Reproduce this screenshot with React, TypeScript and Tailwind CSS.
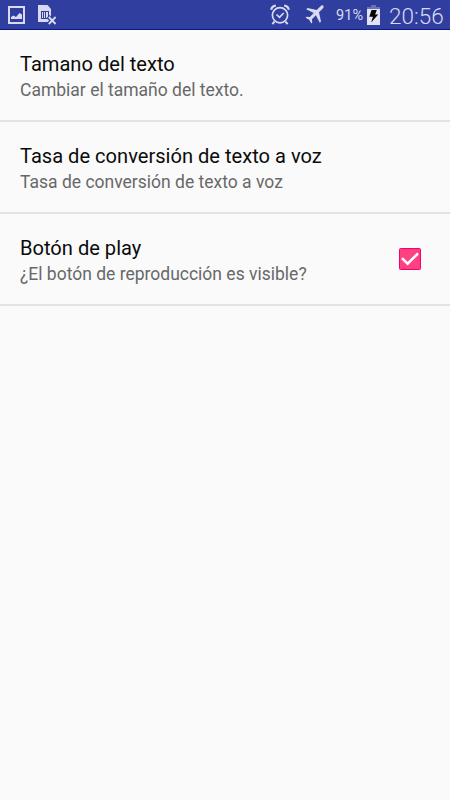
import { useState } from 'react';

type Preference = {
    title: string;
    summary: string;
    checkable?: boolean;
};

const preferences: Preference[] = [
    { title: 'Tamano del texto', summary: 'Cambiar el tamaño del texto.' },
    { title: 'Tasa de conversión de texto a voz', summary: 'Tasa de conversión de texto a voz' },
    { title: 'Botón de play', summary: '¿El botón de reproducción es visible?', checkable: true },
];

function PictureIcon() {
    return (
        <svg width="18" height="20" viewBox="0 0 18 20" fill="#d9daf0">
            <path fillRule="evenodd" d="M0 1h17v18H0zM2 3v14h13V3z" />
            <path d="M3 14v-2l2.500-1.500 2.500 1.500 3.500-4 2.500 1.500V14z" />
        </svg>
    );
}

function SimIcon() {
    return (
        <svg width="19" height="20" viewBox="0 0 19 20">
            <path d="M0 0h9.500L13 4v13H0z" fill="#d9daf0" />
            <path d="M3 6h1v8H3zm2 0h1v8H5zm2 0h1v8H7zm3 0h1v8h-1zM3 6h8v1H3zm0 7h8v1H3z" fill="#303f9f" />
            <path d="m10 11.500 8 8m0-8-8 8" stroke="#303f9f" strokeWidth="4" />
            <path d="m10.800 12 6.800 7m0-7-6.800 7" stroke="#d9daf0" strokeWidth="1.800" />
        </svg>
    );
}

function AlarmIcon() {
    return (
        <svg width="20" height="22" viewBox="0 0 20 22" fill="none" stroke="#d9daf0">
            <circle cx="10" cy="11.200" r="7.600" strokeWidth="1.700" />
            <path d="m6.500 10.500 3 2.900 4.200-4.400" strokeWidth="1.700" />
            <path d="M1.200 5.700C1.600 3.500 3.400 1.900 5.800 1.700M14.200 1.700c2.400.2 4.200 1.800 4.600 4" strokeWidth="2.200" />
            <path d="m4.400 17.700-2 2.400m13.200-2.400 2 2.400" strokeWidth="2" />
        </svg>
    );
}

function PlaneIcon() {
    return (
        <svg width="19" height="19" viewBox="0 0 19 19" fill="#d9daf0">
            <path d="M18.300.7c-.8-.7-2-.3-3 .7L11.700 5 2.500 3 1.200 4.200l7.500 3.900-3.800 4-3.300-.4-1.100 1 3.700 2.100 2.100 3.700 1-1.100-.4-3.200 4-3.900 3.900 7.500 1.200-1.300-2-9.200 3.600-3.600c1-1 1.400-2.200.7-3z" />
        </svg>
    );
}

function BatteryIcon() {
    return (
        <svg width="13" height="21" viewBox="0 0 13 21">
            <path d="M4 1h5v2h4v2H0V3h4z" fill="#6973b8" />
            <path d="M0 5h13v16H0z" fill="#e1e2f4" />
            <path d="M4.500 6h5.300L8.100 10.500h3.100L4.200 18.500l1.700-5.700H2.300z" fill="#050505" />
        </svg>
    );
}

function StatusBar() {
    return (
        <header className="flex h-[30px] items-start border-b border-[#0b1688] bg-[#303f9f] text-[#d9daf0]">
            <div className="flex pt-[5px] pl-2">
                <PictureIcon />
                <div className="ml-[12px]">
                    <SimIcon />
                </div>
            </div>
            <div className="mr-[6px] ml-auto flex items-start">
                <div className="pt-1">
                    <AlarmIcon />
                </div>
                <div className="ml-[15px] pt-[5px]">
                    <PlaneIcon />
                </div>
                <span className="ml-[12px] w-[28px] pt-[6px] text-[14.500px] leading-5 tracking-[0.1px] whitespace-nowrap">91%</span>
                <div className="ml-[3px] pt-1">
                    <BatteryIcon />
                </div>
                <span className="ml-[9px] w-[55px] pt-[3px] text-[22.500px] leading-[27px] font-light whitespace-nowrap">20:56</span>
            </div>
        </header>
    );
}

function Checkbox({ checked, onChange }: { checked: boolean; onChange: () => void }) {
    return (
        <button role="checkbox" aria-checked={checked} onClick={onChange} className="mr-[29px] mb-px size-[22px]">
            <svg width="22" height="22" viewBox="0 0 22 22">
                <rect x=".5" y=".5" width="21" height="21" rx="1" fill={checked ? '#ff4081' : 'none'} stroke="#f50073" />
                {checked && <path d="m3 10.200 5.600 5.500L19 5.300" fill="none" stroke="#fff" strokeWidth="2.500" />}
            </svg>
        </button>
    );
}

export default function App() {
    const [playVisible, setPlayVisible] = useState(true);

    return (
        <div className="flex h-screen flex-col overflow-hidden bg-[#fafafa] font-['Roboto',sans-serif]">
            <StatusBar />

            <main className="flex-1">
                {preferences.map((pref) => (
                    <div key={pref.title} className="flex h-[92px] items-center border-b-2 border-[#e3e3e3] pl-5">
                        <div className="flex-1 pt-[4px]">
                            <h2 className="text-[20.100px] leading-[26px] whitespace-nowrap text-[#0b0b0b]">{pref.title}</h2>
                            <p className="text-[17.500px] leading-[27px] whitespace-nowrap text-[#686868]">{pref.summary}</p>
                        </div>
                        {pref.checkable && <Checkbox checked={playVisible} onChange={() => setPlayVisible(!playVisible)} />}
                    </div>
                ))}
            </main>
        </div>
    );
}
